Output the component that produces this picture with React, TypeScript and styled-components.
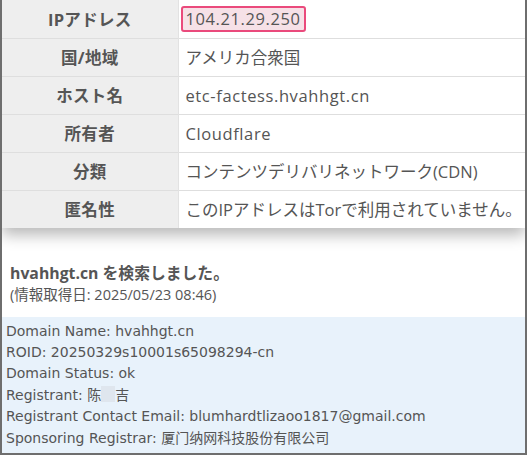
import React from "react";
import styled, { createGlobalStyle } from "styled-components";

const Global = createGlobalStyle`
  html, body { margin: 0; padding: 0; background: #fff; }
  * { box-sizing: border-box; }
`;

const Frame = styled.div`
  width: 527px;
  height: 455px;
  border-left: 2px solid #6e6e6e;
  border-right: 2px solid #6e6e6e;
  border-bottom: 2px solid #6e6e6e;
  background: #fff;
  overflow: hidden;
  display: flex;
  flex-direction: column;
`;

const Card = styled.div`
  background: #fff;
  box-shadow: 0 7px 14px rgba(0, 0, 0, 0.28);
  position: relative;
  z-index: 1;
`;

const Table = styled.table`
  width: 100%;
  table-layout: fixed;
  border-collapse: collapse;
  font-family: "Open Sans", "Noto Sans CJK JP", sans-serif;
  font-size: 16.5px;
  color: #555;
`;

const HeadCol = styled.col`
  width: 176px;
`;

const Row = styled.tr`
  height: 38px;
  border-bottom: 1px solid #dedede;
  &:last-child { border-bottom: none; }
`;

const Head = styled.th`
  background: #eeeeee;
  font-weight: bold;
  text-align: center;
  color: #555;
  border-right: 1px solid #e2e2e2;
  padding: 0;
  letter-spacing: 0.3px;
`;

const Cell = styled.td<{ $latin?: boolean }>`
  padding: 0 0 0 7px;
  background: #fff;
  white-space: nowrap;
  letter-spacing: ${(p) => (p.$latin ? "0.6px" : "0")};
`;

const Highlight = styled.span`
  display: inline-block;
  padding: 0 3px;
  line-height: 22px;
  height: 26px;
  border: 2px solid #ea4a7c;
  border-radius: 3px;
  background: #f6e1e7;
  margin-left: -5px;
`;

const Result = styled.div`
  padding: 34px 8px 0 8px;
  height: 90px;
  font-family: "Open Sans", "Noto Sans CJK JP", sans-serif;
  color: #555;
`;

const Title = styled.div`
  font-size: 15.8px;
  font-weight: bold;
  line-height: 22px;
`;

const Sub = styled.div`
  font-size: 14.5px;
  line-height: 20px;
  margin-top: 1px;
`;

const Whois = styled.div`
  flex: 1;
  background: #e8f2fb;
  padding: 4px 4px;
  font-family: "DejaVu Sans", "Noto Sans CJK SC", sans-serif;
  font-size: 14px;
  color: #555;
  line-height: 21.4px;
`;

const Line = styled.div`
  white-space: nowrap;
`;

const Redact = styled.span`
  display: inline-block;
  width: 14px;
  height: 16px;
  vertical-align: -2px;
  background: #dfe6ee;
`;

const rows: [string, React.ReactNode, boolean][] = [
  ["IPアドレス", <Highlight>104.21.29.250</Highlight>, true],
  ["国/地域", "アメリカ合衆国", false],
  ["ホスト名", "etc-factess.hvahhgt.cn", true],
  ["所有者", "Cloudflare", true],
  ["分類", "コンテンツデリバリネットワーク(CDN)", false],
  ["匿名性", "このIPアドレスはTorで利用されていません。", false],
];

export default function App() {
  return (
    <>
      <Global />
      <Frame>
        <Card>
          <Table>
            <colgroup>
              <HeadCol />
              <col />
            </colgroup>
            <tbody>
              {rows.map(([h, v, latin]) => (
                <Row key={h}>
                  <Head>{h}</Head>
                  <Cell $latin={latin}>{v}</Cell>
                </Row>
              ))}
            </tbody>
          </Table>
        </Card>
        <Result>
          <Title>hvahhgt.cn を検索しました。</Title>
          <Sub>(情報取得日: 2025/05/23 08:46)</Sub>
        </Result>
        <Whois>
          <Line>Domain Name: hvahhgt.cn</Line>
          <Line>ROID: 20250329s10001s65098294-cn</Line>
          <Line>Domain Status: ok</Line>
          <Line>
            Registrant: 陈<Redact />吉
          </Line>
          <Line>Registrant Contact Email: blumhardtlizaoo1817@gmail.com</Line>
          <Line>Sponsoring Registrar: 厦门纳网科技股份有限公司</Line>
        </Whois>
      </Frame>
    </>
  );
}
